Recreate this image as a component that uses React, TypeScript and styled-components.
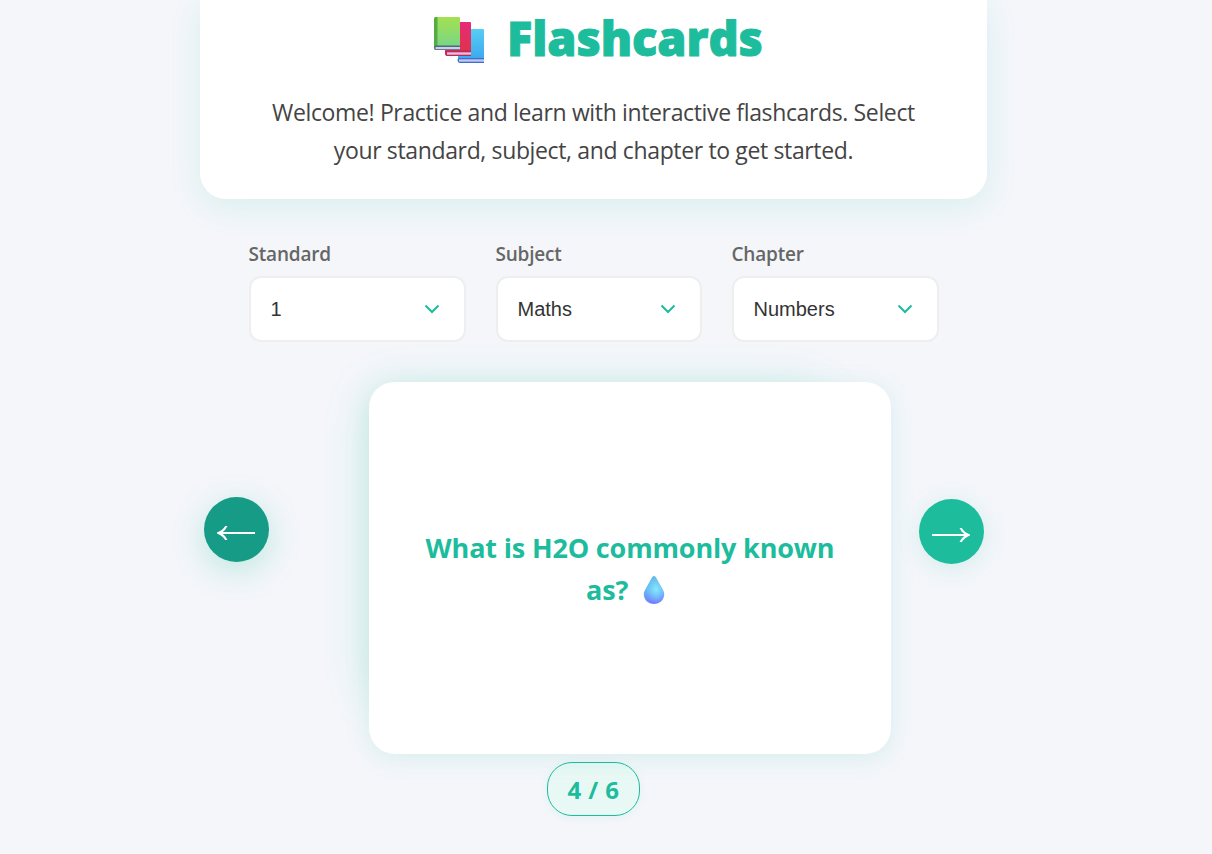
import React from 'react';
import styled, { createGlobalStyle } from 'styled-components';

const GlobalStyle = createGlobalStyle`
  * { box-sizing: border-box; }
  html, body { margin: 0; padding: 0; background: #f4f6fa; }
  body { font-family: 'Open Sans', 'Noto Sans', sans-serif; overflow: hidden; }
`;

const Page = styled.main`
  width: 787px;
  height: 854px;
  margin-left: 200px;
  display: flex;
  flex-direction: column;
`;

const Header = styled.header`
  height: 199px;
  flex: none;
  background: #fff;
  border-radius: 0 0 26px 26px;
  box-shadow: 0 8px 32px rgba(29, 188, 157, 0.12);
  display: flex;
  flex-direction: column;
  align-items: center;
`;

const Title = styled.h1`
  margin: 0;
  height: 80px;
  display: flex;
  align-items: center;
  align-self: flex-start;
  padding-left: 233px;
  gap: 22px;
  color: #1dbc9d;
  font-size: 47px;
  line-height: 77px;
  font-weight: 800;
  letter-spacing: -0.1px;
  -webkit-text-stroke: 1px #1dbc9d;
  white-space: nowrap;
`;

const TitleText = styled.span`
  height: 80px;
`;

const Intro = styled.p`
  margin: 13px 0 0;
  color: #444;
  font-size: 23px;
  line-height: 38px;
  letter-spacing: -0.36px;
  text-align: center;
  white-space: nowrap;
`;

const Filters = styled.section`
  flex: none;
  display: grid;
  grid-template-columns: 217px 206px 207px;
  column-gap: 30px;
  padding: 39px 0 0 49px;
`;

const Field = styled.label`
  display: flex;
  flex-direction: column;
  gap: 8px;
`;

const FieldName = styled.span`
  margin-left: -0.5px;
  height: 30px;
  line-height: 32px;
  font-size: 19px;
  font-weight: 600;
  letter-spacing: -0.2px;
  color: #666;
`;

const Select = styled.div`
  height: 66px;
  display: flex;
  align-items: center;
  justify-content: space-between;
  padding: 0 24px 0 19.5px;
  background: #fff;
  border: 2px solid #eee;
  border-radius: 12px;
  font-family: 'Liberation Sans', Arial, sans-serif;
  font-size: 20px;
  color: #333;
`;

const Deck = styled.section`
  position: relative;
  z-index: 1;
  flex: none;
  display: flex;
  align-items: center;
  justify-content: space-between;
  margin-top: 40px;
  padding: 0 3px 0 4px;
  height: 372px;
`;

const RoundButton = styled.button<{ $active?: boolean }>`
  width: 65px;
  height: 65px;
  margin: ${p => (p.$active ? '-78px 0 0' : '-73px 0 0')};
  padding: 7px 2px 0 0;
  border: 0;
  border-radius: 50%;
  display: flex;
  align-items: center;
  justify-content: center;
  background: ${p => (p.$active ? '#169c86' : '#1dbc9d')};
  box-shadow: ${p => (p.$active ? '0 8px 32px rgba(29,188,157,.25)' : '0 4px 24px rgba(29,188,157,.15)')};
`;

const CardStage = styled.div`
  width: 522px;
  height: 372px;
  margin-left: 72px;
  display: grid;
`;

const CardGlow = styled.div`
  grid-area: 1 / 1;
  width: 455px;
  height: 310px;
  border-radius: 24px;
  box-shadow: 0 8px 48px rgba(29, 188, 157, 0.18);
`;

const Card = styled.article`
  grid-area: 1 / 1;
  position: relative;
  display: flex;
  align-items: center;
  justify-content: center;
  background: #fff;
  border-radius: 26px;
  box-shadow: 0 4px 24px rgba(29, 188, 157, 0.13);
`;

const Question = styled.div`
  padding-top: 1px;
  color: #1dbc9d;
  font-size: 27px;
  font-weight: 700;
  line-height: 42px;
  letter-spacing: -0.16px;
  text-align: center;
  white-space: nowrap;
  svg { vertical-align: -4px; margin: 0 9px 0 8px; }
`;

const Counter = styled.div`
  flex: none;
  align-self: center;
  width: 93px;
  height: 54px;
  margin-top: 8px;
  display: flex;
  align-items: center;
  justify-content: center;
  border: 1px solid #1dbc9d;
  border-radius: 25px;
  background: #e8f8f5;
  box-shadow: 0 2px 8px rgba(29, 188, 157, 0.08);
  color: #1dbc9d;
  font-size: 24px;
  font-weight: 700;
  letter-spacing: 0.4px;
  white-space: nowrap;
`;

const Books = () => (
  <svg width="52" height="48" viewBox="0 0 52 48" aria-hidden="true">
    <defs>
      <linearGradient id="green" x1="0" y1="0" x2="0" y2="1">
        <stop offset="0" stopColor="#a5e04f" /><stop offset="1" stopColor="#73d58e" />
      </linearGradient>
      <linearGradient id="red" x1="0" y1="0" x2="0" y2="1">
        <stop offset="0" stopColor="#e52b78" /><stop offset="1" stopColor="#df3446" />
      </linearGradient>
      <linearGradient id="blue" x1="0" y1="0" x2="0" y2="1">
        <stop offset="0" stopColor="#56cdf4" /><stop offset="1" stopColor="#3ba5ee" />
      </linearGradient>
    </defs>
    <path d="M25 15q0-2 2-2h23q1 0 1 1v32H27q-2 0-2-2z" fill="url(#blue)" />
    <path d="M24.500 44q0-2 2-2h24.500v5H27q-2 0-2.500-3z" fill="#3d6fc9" />
    <path d="M26 43.300H51v2.400H26z" fill="#c3c5f4" />
    <path d="M12 8q0-2 2-2h23q1 0 1 1v32H14q-2 0-2-2z" fill="url(#red)" />
    <path d="M12 37q0-2.500 2-2.500h24V40H14q-2 0-2-3z" fill="#b72a5a" />
    <path d="M14 36.300h24v2.400H14z" fill="#efb9e2" />
    <path d="M1 3q0-2 2-2h23q1 0 1 1v32H3q-2 0-2-2z" fill="url(#green)" />
    <path d="M1 3q0-2 2-2h1.500v30H1z" fill="#55ab45" />
    <path d="M1 31.500q0-2 2-2h24v4.500H3q-2 0-2-2.500z" fill="#446f78" />
    <path d="M2.500 31h24.500v2.200H2.500z" fill="#d9c8ee" />
  </svg>
);

const Drop = () => (
  <svg width="22" height="28" viewBox="0 0 22 28" aria-hidden="true">
    <defs>
      <linearGradient id="dropBase" x1="0" y1="0" x2="0" y2="1">
        <stop offset="0" stopColor="#62b4e4" /><stop offset=".5" stopColor="#65baf5" /><stop offset="1" stopColor="#7678ff" />
      </linearGradient>
      <radialGradient id="dropShine" cx=".6" cy=".48" r=".5">
        <stop offset="0" stopColor="#88e8ff" /><stop offset="1" stopColor="#7cd8ff" stopOpacity="0" />
      </radialGradient>
    </defs>
    <path d="M11 0c-1 0-1.700.8-2.300 1.900L3 12.200C1.500 14.700.8 16.200.8 18.300.8 23.700 5.200 28 11 28s10.200-4.300 10.200-9.700c0-2.100-.7-3.600-2.200-6.100L13.300 1.900C12.700.8 12 0 11 0z" fill="url(#dropBase)" />
    <path d="M11 0c-1 0-1.700.8-2.300 1.900L3 12.200C1.500 14.700.8 16.200.8 18.300.8 23.700 5.200 28 11 28s10.200-4.300 10.200-9.700c0-2.100-.7-3.600-2.200-6.100L13.300 1.900C12.700.8 12 0 11 0z" fill="url(#dropShine)" />
  </svg>
);

const Chevron = () => (
  <svg width="16" height="10" viewBox="0 0 16 10" fill="none" aria-hidden="true">
    <path d="M1.500 1.500L8 8l6.500-6.500" stroke="#1dbc9d" strokeWidth="2" />
  </svg>
);

const Arrow = ({ back }: { back?: boolean }) => (
  <svg width="38" height="14" viewBox="0 0 38 14" fill="none" aria-hidden="true">
    <g transform={back ? 'matrix(-1 0 0 1 38 0)' : undefined}>
      <path d="M0 7h36" stroke="#fff" strokeWidth="2" />
      <path d="M27.500 0h2.300Q32.500 4.500 38 6.500v1Q32.500 9.500 29.800 14h-2.300Q29.500 9.500 33.500 7 29.500 4.500 27.500 0z" fill="#fff" />
    </g>
  </svg>
);

const filters = [
  { name: 'Standard', value: '1' },
  { name: 'Subject', value: 'Maths' },
  { name: 'Chapter', value: 'Numbers' },
];

export default function App() {
  return (
    <>
      <GlobalStyle />
      <Page>
        <Header>
          <Title><Books /><TitleText>Flashcards</TitleText></Title>
          <Intro>
            Welcome! Practice and learn with interactive flashcards. Select<br />
            your standard, subject, and chapter to get started.
          </Intro>
        </Header>
        <Filters>
          {filters.map(f => (
            <Field key={f.name}>
              <FieldName>{f.name}</FieldName>
              <Select>{f.value}<Chevron /></Select>
            </Field>
          ))}
        </Filters>
        <Deck>
          <RoundButton $active aria-label="Previous card"><Arrow back /></RoundButton>
          <CardStage>
            <CardGlow />
            <Card>
              <Question>What is H2O commonly known<br />as? <Drop /></Question>
            </Card>
          </CardStage>
          <RoundButton aria-label="Next card"><Arrow /></RoundButton>
        </Deck>
        <Counter>4 / 6</Counter>
      </Page>
    </>
  );
}
